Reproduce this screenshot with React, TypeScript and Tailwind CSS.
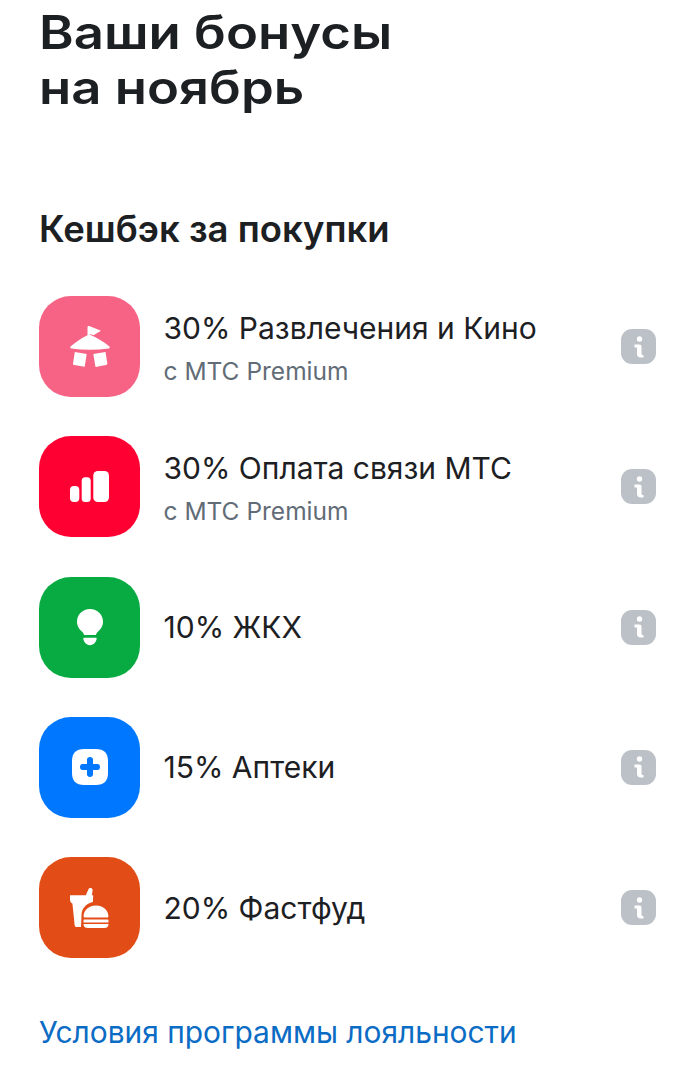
import type { ReactNode } from "react";

function TentIcon() {
  return (
    <svg viewBox="0 0 40 41" className="w-10 h-[41px]" fill="#fff">
      <path d="M17.500 1.200c0-1 .8-1.400 1.700-1.100L31 4.800l-7.500 4.400-3.500-1.200v.8c6.800 2.700 13 6.500 19.200 11.400.9.700.5 2-.6 2.300-6 .8-12.300 1.200-18.600 1.200S7.400 23.300 1.400 22.500c-1.100-.3-1.500-1.600-.6-2.300 5-4.100 10.700-8 16.700-10.900z" />
      <path d="M4.800 26l11.900 1.900-2 12.900-10.500-1.700c-.8-.1-1.300-.9-1.200-1.700z" />
      <path d="M23.300 27.900L35.500 26l1.800 11.300c.1.800-.4 1.600-1.200 1.700l-10.600 1.900z" />
    </svg>
  );
}

function BarsIcon() {
  return (
    <svg viewBox="0 0 39 31" className="w-[39px] h-[31px]" fill="#fff">
      <rect x="0" y="15" width="9.300" height="16" rx="4" />
      <rect x="11.700" y="6.300" width="9" height="24.700" rx="3.500" />
      <rect x="23.300" y="0" width="15.700" height="31" rx="4.500" />
    </svg>
  );
}

function BulbIcon() {
  return (
    <svg viewBox="0 0 30 42" className="w-[28px] h-[39px]" fill="#fff">
      <path d="M15 1C7 1 1 7 1 14.500c0 5 2.600 8.500 5.500 11 1.400 1.200 1.600 2.500 2.400 3.500h12.200c.8-1 1-2.300 2.400-3.500 2.900-2.500 5.500-6 5.500-11C29 7 23 1 15 1z" />
      <path d="M8.500 32h13c.5 0 .8.400.7.900-.7 4.300-3.200 7.100-7.200 7.100s-6.500-2.800-7.200-7.100c-.1-.5.200-.9.700-.9z" />
    </svg>
  );
}

function PharmacyIcon() {
  return (
    <svg viewBox="0 0 36 36" className="w-9 h-9">
      <path d="M12 0h12c8 0 12 4 12 12v12c0 8-4 12-12 12H12C4 36 0 32 0 24V12C0 4 4 0 12 0z" fill="#fff" />
      <path d="M15 10.500C15 9 16.300 8 18 8s3 1 3 2.500V15h4.500c1.500 0 2.500 1.300 2.500 3s-1 3-2.500 3H21v4.500c0 1.500-1.300 2.500-3 2.500s-3-1-3-2.500V21h-4.500C9 21 8 19.700 8 18s1-3 2.500-3H15z" fill="#0077ff" />
    </svg>
  );
}

function FastfoodIcon() {
  return (
    <svg viewBox="0 0 39 40" className="w-[39px] h-10" fill="#fff">
      <path d="M0 7.300h15.800L18.600 1c.4-.9 1.300-1.200 2.200-.9 1.200.4 2 1.300 1.800 2.400l-.7 4.800h1.300l-.3 6.700c-6.800 1.500-11.300 6.500-11.400 13-.1 3.500-.3 7.500-.5 12H6.500c-1 0-1.600-.6-1.800-1.500L2.400 15.500C1 14.900 0 13.500 0 11.500z" />
      <path d="M13.600 28c.3-6 5.500-10.500 12.400-10.500S38.100 22 38.400 28c.1 1-.5 1.500-1.300 1.500H14.900c-.8 0-1.400-.5-1.300-1.500z" />
      <rect x="13.500" y="31.500" width="25" height="3" rx="0.500" />
      <path d="M13.500 36h25c0 2.500-1.500 4-4 4h-17c-2.500 0-4-1.500-4-4z" />
    </svg>
  );
}

function InfoBadge() {
  return (
    <div className="w-[35px] h-[35px] rounded-[11px] bg-[#bbc1c7] flex flex-col items-center justify-center shrink-0">
      <svg viewBox="0 0 12 22" className="w-[12px] h-[22px]" fill="#fff">
        <circle cx="6.500" cy="3" r="2.700" />
        <path d="M1.500 8.500h5c1.200 0 2 .8 2 2v7c0 1 .6 1.500 1.500 1.500h.5v2.500H7.500c-2.200 0-3.500-1.300-3.500-3.500v-6.500H1.500z" />
      </svg>
    </div>
  );
}

const rows: { icon: ReactNode; color: string; title: string; sub?: string }[] = [
  { icon: <TentIcon />, color: "bg-[#f66385]", title: "30% Развлечения и Кино", sub: "с МТС Premium" },
  { icon: <BarsIcon />, color: "bg-[#ff0032]", title: "30% Оплата связи МТС", sub: "с МТС Premium" },
  { icon: <BulbIcon />, color: "bg-[#08ab42]", title: "10% ЖКХ" },
  { icon: <PharmacyIcon />, color: "bg-[#0077ff]", title: "15% Аптеки" },
  { icon: <FastfoodIcon />, color: "bg-[#e24c16]", title: "20% Фастфуд" },
];

export default function App() {
  return (
    <div className="w-[700px] h-[1090px] bg-white overflow-hidden pl-[39px] pr-[44px] font-['Inter',sans-serif] text-[#1d2023]">
      {/* Title */}
      <h1 className="pt-[5px] text-[46px] leading-[55px] font-semibold scale-x-[1.145] origin-left">
        Ваши бонусы
        <br />
        на ноябрь
      </h1>

      <h2 className="mt-[91px] text-[36.500px] leading-[46px] font-semibold">Кешбэк за покупки</h2>

      {/* Cashback rows */}
      <div className="mt-[44px] flex flex-col gap-[39.300px]">
        {rows.map((row) => (
          <div key={row.title} className="flex items-center h-[101px]">
            <div className={`w-[101px] h-[101px] rounded-[32px] flex items-center justify-center shrink-0 ${row.color}`}>
              {row.icon}
            </div>
            <div className="ml-[23.500px] flex-1">
              <div className="text-[30px] leading-[42px]">{row.title}</div>
              {row.sub && <div className="mt-[4px] -mb-[2px] text-[24.500px] leading-[36px] text-[#626c77]">{row.sub}</div>}
            </div>
            <InfoBadge />
          </div>
        ))}
      </div>

      <div className="mt-[53px] text-[29.900px] leading-[42px] text-[#0a6cc4]">Условия программы лояльности</div>
    </div>
  );
}
